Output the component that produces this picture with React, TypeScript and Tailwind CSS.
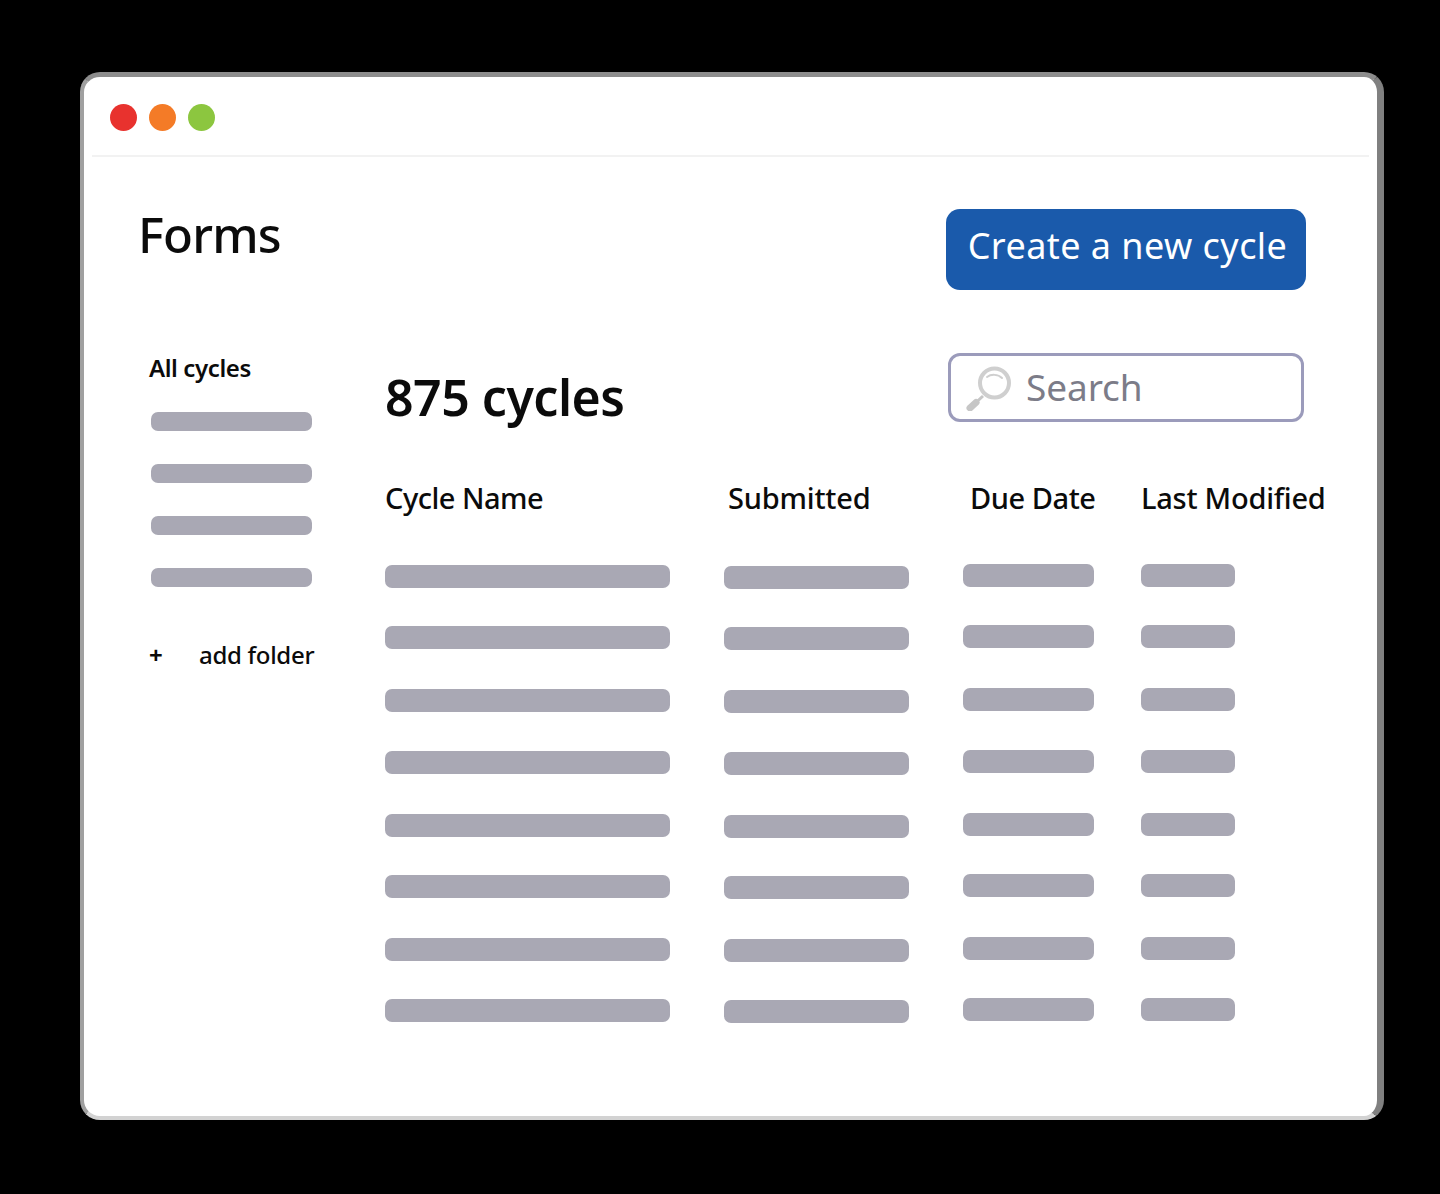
const rowGaps = ["mt-0", "mt-[38px]", "mt-[40px]", "mt-[39px]", "mt-[40px]", "mt-[38px]", "mt-[40px]", "mt-[38px]"];

function Bars({ width }: { width: string }) {
  return (
    <div className="flex flex-col">
      {rowGaps.map((gap, i) => (
        <div key={i} className={`${gap} ${width} h-[23px] shrink-0 rounded-[7px] bg-[#a9a8b4]`} />
      ))}
    </div>
  );
}

function SearchIcon() {
  return (
    <svg width="46" height="46" viewBox="0 0 46 46" fill="none" className="shrink-0">
      <circle cx="28.5" cy="18" r="14.5" stroke="#cfcfcf" strokeWidth="4" fill="#fff" />
      <path d="M21 12c4-3 11-3 15 1" stroke="#cfcfcf" strokeWidth="2" strokeLinecap="round" />
      <path d="M17 31 L10 37.5" stroke="#c6c6c6" strokeWidth="3" />
      <path d="M10 37.5 L4 43" stroke="#c6c6c6" strokeWidth="7" strokeLinecap="round" />
    </svg>
  );
}

export default function App() {
  return (
    <div className="h-[1194px] w-[1440px] overflow-hidden bg-black pl-[80px] pt-[72px] font-['Noto_Sans',sans-serif] text-[#0b0b0b]">
      <div className="h-[1048px] w-[1304px] rounded-[20px] border-t-[5px] border-r-[7px] border-b-[4px] border-l-[4px] border-t-[#8d8d8d] border-r-[#808080] border-b-[#d2d2d2] border-l-[#a0a0a0] bg-white">
        {/* Barra de ventana */}
        <div className="mx-[8px] flex h-[80px] items-center gap-[12px] border-b-2 border-[#f2f2f2] pl-[18px] pt-[3px]">
          <span className="h-[27px] w-[27px] rounded-full bg-[#e8322e]" />
          <span className="h-[27px] w-[27px] rounded-full bg-[#f47b27]" />
          <span className="h-[27px] w-[27px] rounded-full bg-[#8cc63f]" />
        </div>

        <div className="flex items-start justify-between pl-[54px] pr-[71px] pt-[52px]">
          <h1 className="-mt-[5px] text-[49px] leading-[60px] font-medium tracking-[-0.8px]">Forms</h1>
          <button
            type="button"
            className="flex h-[81px] w-[360px] items-center justify-center rounded-[14px] bg-[#1a5aab] pb-[8px] pl-[3px] text-[36px] tracking-[0.45px] text-white"
          >
            Create a new cycle
          </button>
        </div>

        <div className="flex pl-[65px] pt-[61px]">
          {/* Lista de carpetas */}
          <aside className="w-[236px] shrink-0">
            <div className="-mt-px text-[24px] leading-[36px] font-semibold tracking-[-0.4px]">All cycles</div>
            <div className="ml-[2px] mt-[26px] flex flex-col gap-[33px]">
              <div className="h-[19px] w-[161px] rounded-[7px] bg-[#a9a8b4]" />
              <div className="h-[19px] w-[161px] rounded-[7px] bg-[#a9a8b4]" />
              <div className="h-[19px] w-[161px] rounded-[7px] bg-[#a9a8b4]" />
              <div className="h-[19px] w-[161px] rounded-[7px] bg-[#a9a8b4]" />
            </div>
            <div className="mt-[50px] flex items-center text-[24px] leading-[36px] font-medium tracking-[-0.3px]">
              <span className="w-[50px] font-bold">+</span>
              <span>add folder</span>
            </div>
          </aside>

          <main className="min-w-0 flex-1 pt-[2px]">
            <div className="flex items-start justify-between pr-[73px]">
              <h2 className="pt-[14px] text-[50px] leading-[60px] font-semibold tracking-[-0.5px]">875 cycles</h2>
              <div className="flex h-[69px] w-[356px] items-center gap-[14px] rounded-[12px] border-[3px] border-[#9b9bbb] pl-[15px]">
                <SearchIcon />
                <span className="-mt-px text-[37px] tracking-[-0.1px] text-[#7c7c88]">Search</span>
              </div>
            </div>

            <div className="mt-[49px] flex">
              <div className="w-[339px] shrink-0">
                <div className="text-[29px] leading-[44px] font-medium tracking-[-0.5px]">Cycle Name</div>
                <div className="mt-[45px]"><Bars width="w-[285px]" /></div>
              </div>
              <div className="w-[239px] shrink-0">
                <div className="pl-1 text-[29px] leading-[44px] font-medium tracking-[-0.2px]">Submitted</div>
                <div className="mt-[46px]"><Bars width="w-[185px]" /></div>
              </div>
              <div className="w-[178px] shrink-0">
                <div className="pl-[7px] text-[29px] leading-[44px] font-medium tracking-[-0.45px]">Due Date</div>
                <div className="mt-[44px]"><Bars width="w-[131px]" /></div>
              </div>
              <div className="w-[190px] shrink-0">
                <div className="text-[29px] leading-[44px] font-medium tracking-[-0.25px] whitespace-nowrap">Last Modified</div>
                <div className="mt-[44px]"><Bars width="w-[94px]" /></div>
              </div>
            </div>
          </main>
        </div>
      </div>
    </div>
  );
}
